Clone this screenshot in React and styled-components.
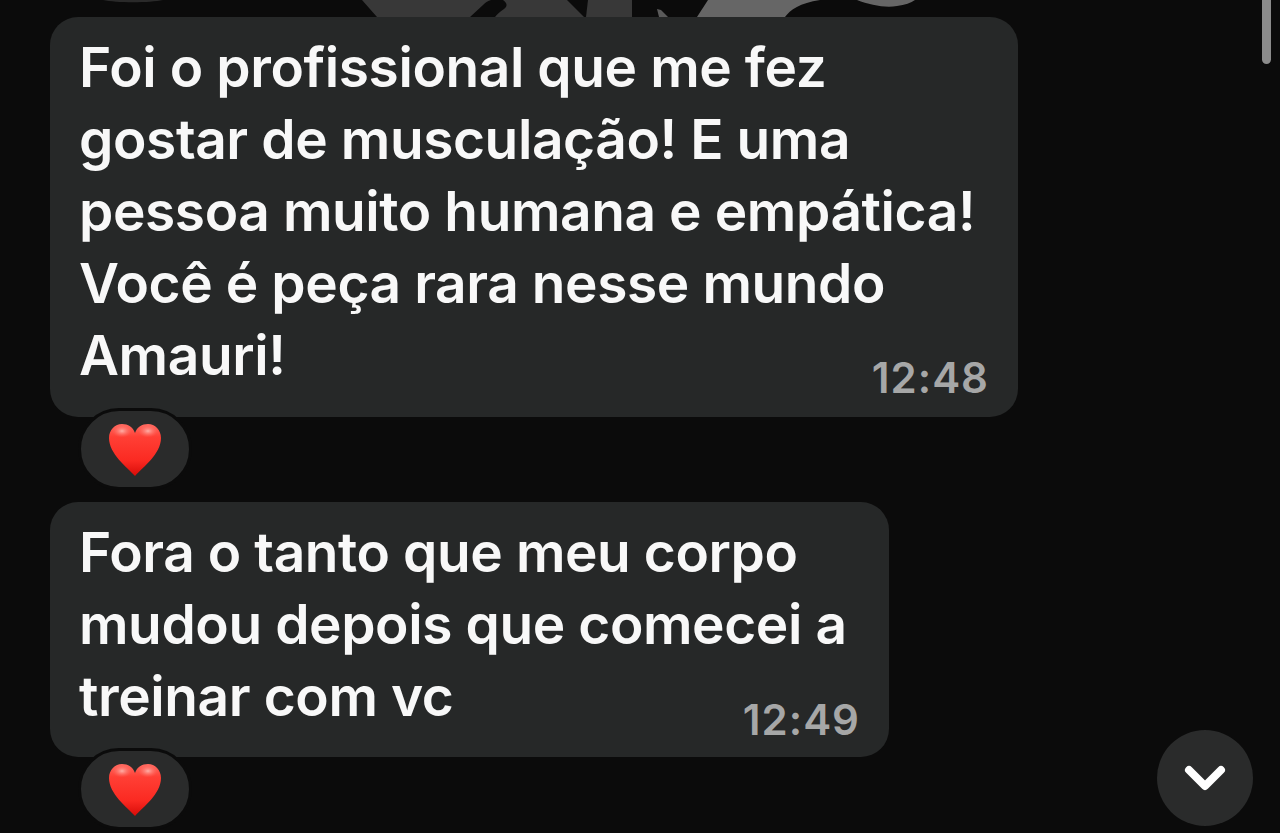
import React from 'react';
import styled, { createGlobalStyle } from 'styled-components';
import { ChevronDown } from 'lucide-react';

const GlobalStyle = createGlobalStyle`
  html, body {
    margin: 0;
    padding: 0;
    background-color: #0b0b0b;
  }
`;

const Screen = styled.div`
  position: relative;
  width: 1280px;
  height: 833px;
  overflow: hidden;
  background-color: #0b0b0b;
  font-family: Inter, "Liberation Sans", sans-serif;
`;

const TopArt = styled.svg`
  display: block;
  width: 1280px;
  height: 17px;
`;

const Thread = styled.div`
  display: flex;
  flex-direction: column;
  align-items: flex-start;
  padding-left: 50px;
`;

const MessageGroup = styled.div`
  display: flex;
  flex-direction: column;
  align-items: flex-start;
  margin-bottom: 12px;
`;

const Bubble = styled.div`
  box-sizing: border-box;
  width: ${(props) => props.$width}px;
  height: ${(props) => props.$height}px;
  padding: 14px 29px 0 29px;
  background-color: #262828;
  border-radius: 28px;
  display: flex;
  flex-direction: column;
`;

const MessageText = styled.div`
  font-size: 55px;
  font-weight: 600;
  line-height: 72px;
  letter-spacing: -0.4px;
  color: #f8f8f8;
  white-space: nowrap;
`;

const Time = styled.div`
  align-self: flex-end;
  margin-top: ${(props) => props.$offset}px;
  font-size: 42px;
  font-weight: 600;
  line-height: 46px;
  letter-spacing: 1px;
  color: #a6a7a7;
`;

const Reaction = styled.div`
  box-sizing: border-box;
  width: 114px;
  height: 82px;
  margin: -9px 0 0 28px;
  padding-top: 2px;
  display: flex;
  align-items: center;
  justify-content: center;
  background-color: #2a2b2b;
  border: 3px solid #0b0b0b;
  border-radius: 41px;
`;

const ScrollThumb = styled.div`
  position: absolute;
  top: 0;
  left: 1262px;
  width: 9px;
  height: 64px;
  background-color: #8b8b8b;
  border-radius: 0 0 5px 5px;
`;

const ScrollDownButton = styled.div`
  position: absolute;
  left: 1157px;
  top: 730px;
  width: 96px;
  height: 96px;
  border-radius: 50%;
  background-color: #2a2b2b;
  display: flex;
  align-items: center;
  justify-content: center;
  color: #ffffff;
`;

const HeartIcon = ({ id }) => (
  <svg width="54" height="54" viewBox="0 0 54 54">
    <defs>
      <linearGradient id={`${id}Fill`} x1="0" y1="0" x2="0" y2="1">
        <stop offset="0" stopColor="#ff6a60" />
        <stop offset="0.25" stopColor="#ff3f35" />
        <stop offset="0.7" stopColor="#fb2a22" />
        <stop offset="1" stopColor="#d80c08" />
      </linearGradient>
      <radialGradient id={`${id}Gloss`}>
        <stop offset="0" stopColor="#ffb4ac" stopOpacity="0.95" />
        <stop offset="1" stopColor="#ff6a60" stopOpacity="0" />
      </radialGradient>
    </defs>
    <path
      d="M27 53 C19 44 1 31 1 15 C1 7 7 1 14 1 C20 1 25 4 27 10 C29 4 34 1 40 1 C47 1 53 7 53 15 C53 31 35 44 27 53 Z"
      fill={`url(#${id}Fill)`}
    />
    <ellipse cx="14" cy="8" rx="10" ry="6.5" fill={`url(#${id}Gloss)`} />
    <ellipse cx="40" cy="8" rx="10" ry="6.5" fill={`url(#${id}Gloss)`} />
  </svg>
);

const messages = [
  {
    id: 1,
    width: 968,
    height: 400,
    offset: -36,
    time: '12:48',
    lines: [
      'Foi o profissional que me fez',
      'gostar de musculação! E uma',
      'pessoa muito humana e empática!',
      'Você é peça rara nesse mundo',
      'Amauri!',
    ],
  },
  {
    id: 2,
    width: 839,
    height: 255,
    offset: -35,
    time: '12:49',
    lines: ['Fora o tanto que meu corpo', 'mudou depois que comecei a', 'treinar com vc'],
  },
];

const App = () => {
  return (
    <Screen>
      <GlobalStyle />
      <TopArt viewBox="0 0 1280 17">
        <path d="M103 0 L163 0 C150 3 116 3 103 0 Z" fill="#2a2a2a" />
        <path d="M362 0 L377 17 L470 17 L483 5 C486 2 488 1 491 0 Z" fill="#383838" />
        <path d="M503 0 C507 3 508 6 504 9 C500 12 497 14 495 17 L584 17 L567 0 Z" fill="#383838" />
        <path d="M588 0 L586 17 L632 17 L632 0 Z" fill="#383838" />
        <path d="M657 9 L661 10 L668 17 L659 17 Z" fill="#5a5a5a" />
        <path d="M708 0 L697 17 L785 17 C790 10 800 3 820 0 Z" fill="#666666" />
        <path d="M857 0 C870 5 885 8 897 6 C905 5 911 3 915 0 Z" fill="#666666" />
      </TopArt>
      <Thread>
        {messages.map((message) => (
          <MessageGroup key={message.id}>
            <Bubble $width={message.width} $height={message.height}>
              <MessageText>
                {message.lines.map((line) => (
                  <div key={line}>{line}</div>
                ))}
              </MessageText>
              <Time $offset={message.offset}>{message.time}</Time>
            </Bubble>
            <Reaction>
              <HeartIcon id={`heart${message.id}`} />
            </Reaction>
          </MessageGroup>
        ))}
      </Thread>
      <ScrollThumb />
      <ScrollDownButton>
        <ChevronDown size={64} strokeWidth={3} />
      </ScrollDownButton>
    </Screen>
  );
};

export default App;
